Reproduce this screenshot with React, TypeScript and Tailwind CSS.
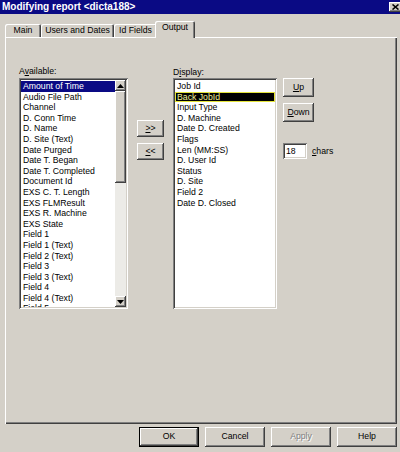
import React from "react";

const raised =
  "shadow-[inset_-1px_-1px_0_#404040,inset_1px_1px_0_#ffffff,inset_-2px_-2px_0_#808080,inset_2px_2px_0_#d4d0c8]";
const sunken =
  "shadow-[inset_1px_1px_0_#808080,inset_-1px_-1px_0_#ffffff,inset_2px_2px_0_#404040,inset_-2px_-2px_0_#d4d0c8]";
const panel =
  "shadow-[inset_1px_1px_0_#ffffff,inset_-1px_-1px_0_#404040,inset_-2px_-2px_0_#808080]";
const defBtn =
  "shadow-[inset_0_0_0_1px_#000000,inset_-2px_-2px_0_#404040,inset_2px_2px_0_#ffffff,inset_-3px_-3px_0_#808080]";
const tabSh =
  "shadow-[inset_1px_1px_0_#ffffff,inset_-1px_0_0_#404040,inset_-2px_0_0_#808080]";

const available = [
  "Amount of Time",
  "Audio File Path",
  "Channel",
  "D. Conn Time",
  "D. Name",
  "D. Site (Text)",
  "Date Purged",
  "Date T. Began",
  "Date T. Completed",
  "Document Id",
  "EXS C. T. Length",
  "EXS FLMResult",
  "EXS R. Machine",
  "EXS State",
  "Field 1",
  "Field 1 (Text)",
  "Field 2 (Text)",
  "Field 3",
  "Field 3 (Text)",
  "Field 4",
  "Field 4 (Text)",
  "Field 5",
];

const display = [
  "Job Id",
  "Back JobId",
  "Input Type",
  "D. Machine",
  "Date D. Created",
  "Flags",
  "Len (MM:SS)",
  "D. User Id",
  "Status",
  "D. Site",
  "Field 2",
  "Date D. Closed",
];

function Arrow({ up }: { up?: boolean }) {
  return (
    <svg width="7" height="4" viewBox="0 0 7 4">
      {up ? (
        <polygon points="3.5,0 7,4 0,4" fill="#000" />
      ) : (
        <polygon points="0,0 7,0 3.5,4" fill="#000" />
      )}
    </svg>
  );
}

export default function App() {
  return (
    <div className="w-[400px] h-[452px] bg-[#d4d0c8] font-['Liberation_Sans',Arial,sans-serif] text-[8.7px] text-black flex flex-col overflow-hidden select-none">
      {/* title bar */}
      <div className="h-[14px] bg-[#0a0a84] flex items-center justify-between pl-[2px]">
        <span className="text-white font-bold text-[10px] leading-[14px] whitespace-nowrap">
          Modifying report &lt;dicta188&gt;
        </span>
        <div
          className={`w-[14px] h-[10px] mr-[-3px] bg-[#d4d0c8] ${raised} flex items-center justify-center pr-[2px]`}
        >
          <svg width="7" height="6" viewBox="0 0 7 6">
            <path d="M0.5 0.5 L6.5 5.5 M6.5 0.5 L0.5 5.5" stroke="#000" strokeWidth="1.6" />
          </svg>
        </div>
      </div>

      {/* tabs */}
      <div className="h-[23px] flex items-end pl-[5px]">
        <div className={`w-[36px] h-[13px] rounded-t-[2px] ${tabSh} flex justify-center pt-[1px] leading-[11px]`}>
          Main
        </div>
        <div className={`w-[73px] h-[13px] rounded-t-[2px] ${tabSh} flex justify-center pt-[1px] leading-[11px]`}>
          Users and Dates
        </div>
        <div className={`w-[43px] h-[13px] rounded-t-[2px] ${tabSh} flex justify-center pt-[1px] leading-[11px]`}>
          Id Fields
        </div>
        <div
          className={`relative z-10 w-[40px] h-[17px] -mb-px -ml-[2px] bg-[#d4d0c8] rounded-t-[2px] ${tabSh} flex justify-center pt-[1px] leading-[11px]`}
        >
          Output
        </div>
      </div>

      {/* panel */}
      <div className={`ml-[5px] w-[392px] h-[387px] ${panel} flex items-start pl-[14px] pt-[29px]`}>
        {/* available */}
        <div className="flex flex-col w-[109px]">
          <div className="h-[12px] leading-[11px]">
            A<span className="underline">v</span>ailable:
          </div>
          <div className={`h-[231px] bg-white ${sunken} p-[2px] flex`}>
            <div className="flex-1 overflow-hidden pt-[1px]">
              {available.map((t, i) => (
                <div
                  key={t}
                  className={`h-[10.6px] leading-[10.6px] pl-[2px] whitespace-nowrap ${
                    i === 0 ? "bg-[#0a0a84] text-white" : ""
                  }`}
                >
                  {t}
                </div>
              ))}
            </div>
            <div className="w-[11px] flex flex-col">
              <div className={`h-[11px] bg-[#d4d0c8] ${raised} flex items-center justify-center`}>
                <Arrow up />
              </div>
              <div className={`h-[92px] bg-[#d4d0c8] ${raised}`} />
              <div className="flex-1 bg-[#ecebe7]" />
              <div className={`h-[11px] bg-[#d4d0c8] ${raised} flex items-center justify-center`}>
                <Arrow />
              </div>
            </div>
          </div>
        </div>

        {/* move buttons */}
        <div className="flex flex-col gap-[6px] ml-[9px] mt-[54px]">
          <div className={`w-[27px] h-[17px] ${raised} flex items-center justify-center leading-[11px]`}>
            <span className="underline">&gt;</span>&gt;
          </div>
          <div className={`w-[27px] h-[17px] ${raised} flex items-center justify-center leading-[11px]`}>
            <span className="underline">&lt;</span>&lt;
          </div>
        </div>

        {/* display */}
        <div className="flex flex-col w-[104px] ml-[9px]">
          <div className="h-[12px] leading-[11px] pt-[1px]">
            D<span className="underline">i</span>splay:
          </div>
          <div className={`h-[231px] bg-white ${sunken} p-[2px]`}>
            <div className="overflow-hidden pt-[1px]">
              {display.map((t, i) =>
                i === 1 ? (
                  <div
                    key={t}
                    className="h-[10.6px] leading-[9px] pl-[1px] whitespace-nowrap bg-black text-[#f2f29a] border border-[#e4e43a]"
                  >
                    {t}
                  </div>
                ) : (
                  <div key={t} className="h-[10.6px] leading-[10.6px] pl-[2px] whitespace-nowrap">
                    {t}
                  </div>
                )
              )}
            </div>
          </div>
        </div>

        {/* right controls */}
        <div className="flex flex-col ml-[6px] mt-[12px]">
          <div className={`w-[31px] h-[19px] ${raised} flex items-center justify-center leading-[11px]`}>
            <span className="underline">U</span>p
          </div>
          <div className={`w-[31px] h-[19px] mt-[6px] ${raised} flex items-center justify-center leading-[11px]`}>
            <span className="underline">D</span>own
          </div>
          <div className="flex items-center mt-[21px]">
            <div className={`w-[24px] h-[16px] bg-white ${sunken} flex items-center pl-[3px] leading-[11px]`}>
              18
            </div>
            <div className="ml-[5px] leading-[11px]">
              <span className="underline">c</span>hars
            </div>
          </div>
        </div>
      </div>

      {/* bottom buttons */}
      <div className="flex justify-end gap-[6px] pr-[3px] mt-[3px]">
        <div className={`w-[60px] h-[20px] ${defBtn} flex items-center justify-center`}>OK</div>
        <div className={`w-[60px] h-[20px] ${raised} flex items-center justify-center`}>Cancel</div>
        <div
          className={`w-[60px] h-[20px] ${raised} flex items-center justify-center text-[#808080] [text-shadow:1px_1px_0_#ffffff]`}
        >
          Apply
        </div>
        <div className={`w-[60px] h-[20px] ${raised} flex items-center justify-center`}>Help</div>
      </div>
    </div>
  );
}
